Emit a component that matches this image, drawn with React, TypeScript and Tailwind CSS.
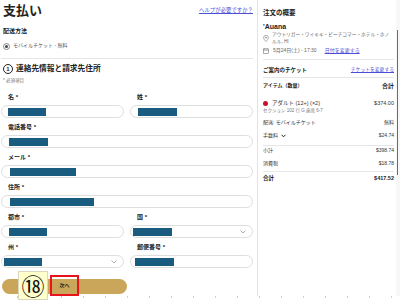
import React from "react";

const mask = "h-[8px] bg-[#1a5c80]";

function Chevron() {
    return (
        <svg width="6" height="4" viewBox="0 0 6 4" className="ml-auto mr-[6px]">
            <path d="M0.5 0.5 L3 3 L5.5 0.5" fill="none" stroke="#9a9a9a" strokeWidth="0.8" />
        </svg>
    );
}

function Field({ label, maskClass, select, className = "" }: { label: string; maskClass: string; select?: boolean; className?: string }) {
    return (
        <div className={className}>
            <div className="h-[10px] leading-[10px] pl-[7px] text-[6px] font-bold text-[#222]">{label}</div>
            <div className="mt-[3px] h-[13px] rounded-full border border-[#dedede] flex items-center">
                <div className={`${mask} ${maskClass}`} />
                {select && <Chevron />}
            </div>
        </div>
    );
}

function Row({ left, right, className = "" }: { left: string; right: string; className?: string }) {
    return (
        <div className={`h-[10px] flex items-center justify-between text-[5px] text-[#333] ${className}`}>
            <span>{left}</span>
            <span>{right}</span>
        </div>
    );
}

export default function App() {
    return (
        <div className="w-[400px] h-[306px] bg-white overflow-hidden flex flex-col font-['Liberation_Sans','Noto_Sans_CJK_JP',sans-serif] text-[#222]">
            <div className="h-[296px] flex">
                {/* checkout form */}
                <div className="w-[257px] pl-[1px] pr-[4px]">
                    <div className="h-[20px] flex items-center justify-between">
                        <h1 className="ml-[2px] text-[13px] font-bold leading-none">支払い</h1>
                        <a className="text-[5.4px] text-[#4b4fd6] underline">ヘルプが必要ですか？</a>
                    </div>

                    <div className="mt-[6px] h-[10px] leading-[10px] pl-[2px] text-[6px] font-bold">配送方法</div>
                    <div className="mt-[5px] h-[10px] flex items-center pl-[2px] gap-[3px]">
                        <span className="w-[7px] h-[7px] rounded-full border border-[#888] flex items-center justify-center">
                            <span className="w-[3px] h-[3px] rounded-full bg-[#444]" />
                        </span>
                        <span className="text-[5px] text-[#555]">モバイルチケット - 無料</span>
                    </div>

                    <div className="mt-[7px] h-px bg-[#e6e6e6]" />

                    <div className="mt-[3px] h-[14px] flex items-center gap-[3px] pl-[2px]">
                        <span className="w-[10px] h-[10px] rounded-full border border-[#222] flex items-center justify-center text-[6px] font-bold leading-none">1</span>
                        <span className="text-[7.7px] font-bold">連絡先情報と請求先住所</span>
                    </div>
                    <div className="mt-[1px] h-[8px] leading-[8px] pl-[2px] text-[4.5px] text-[#777]">* 必須項目</div>

                    <div className="mt-[7px] grid grid-cols-2 gap-x-[6px]">
                        <Field label="名 *" maskClass="ml-[6px] w-[38px]" />
                        <Field label="姓 *" maskClass="ml-[7px] w-[39px]" />
                    </div>
                    <Field className="mt-[4px]" label="電話番号 *" maskClass="ml-[7px] w-[39px]" />
                    <Field className="mt-[4px]" label="メール *" maskClass="ml-[8px] w-[66px]" />
                    <Field className="mt-[4px]" label="住所 *" maskClass="ml-[8px] w-[84px]" />
                    <div className="mt-[4px] grid grid-cols-2 gap-x-[6px]">
                        <Field label="都市 *" maskClass="ml-[7px] w-[38px]" />
                        <Field label="国 *" maskClass="ml-[2px] w-[39px]" select />
                    </div>
                    <div className="mt-[4px] grid grid-cols-2 gap-x-[6px]">
                        <Field label="州 *" maskClass="ml-[2px] w-[38px]" select />
                        <Field label="郵便番号 *" maskClass="ml-[4px] w-[39px]" />
                    </div>

                    <div className="relative mt-[11px] ml-[1px] w-[125px] h-[15px] rounded-full bg-[#c9a65a]">
                        <div className="absolute left-[16px] top-[-8px] w-[30px] h-[29px] bg-[#ffffcc] border border-[#d8d8c0] flex items-center justify-center text-[23px] leading-none text-[#111] font-['Noto_Sans_CJK_JP',sans-serif]">
                            ⑱
                        </div>
                        <div className="absolute left-[48px] top-[-4px] w-[29px] h-[21px] border-2 border-[#e8141b] flex items-center justify-center text-[5px] font-bold text-[#222]">
                            次へ
                        </div>
                    </div>
                </div>

                {/* order summary */}
                <div className="relative w-[143px] border-l border-[#e3e3e3] pl-[5px] pr-[6px]">
                    <div className="mt-[8px] h-[10px] leading-[10px] text-[6.5px] font-bold">注文の概要</div>
                    <div className="mt-[4px] h-[10px] leading-[10px] text-[7px] font-bold">'Auana</div>
                    <div className="flex items-center gap-[3px] text-[#666]">
                        <svg width="6" height="7" viewBox="0 0 6 7" className="shrink-0">
                            <path d="M3 6.6 C1.6 5 0.6 3.8 0.6 2.6 A2.4 2.4 0 0 1 5.4 2.6 C5.4 3.8 4.4 5 3 6.6Z" fill="none" stroke="#777" strokeWidth="0.6" />
                            <circle cx="3" cy="2.6" r="0.8" fill="#777" />
                        </svg>
                        <div className="text-[4.7px] leading-[6.5px] whitespace-nowrap">
                            アウトリガー・ワイキキ・ビーチコマー・ホテル・ホノ
                            <br />
                            ルル, HI
                        </div>
                    </div>
                    <div className="mt-[2px] h-[8px] flex items-center gap-[4px] text-[5px] text-[#666]">
                        <svg width="6" height="6" viewBox="0 0 6 6" className="shrink-0">
                            <rect x="0.4" y="0.9" width="5.2" height="4.7" fill="none" stroke="#777" strokeWidth="0.6" />
                            <line x1="0.4" y1="2.2" x2="5.6" y2="2.2" stroke="#777" strokeWidth="0.6" />
                            <line x1="1.7" y1="0" x2="1.7" y2="1.4" stroke="#777" strokeWidth="0.6" />
                            <line x1="4.3" y1="0" x2="4.3" y2="1.4" stroke="#777" strokeWidth="0.6" />
                        </svg>
                        <span>5月24日(土) - 17:30</span>
                        <a className="ml-[4px] text-[#4b4fd6] underline">日付を変更する</a>
                    </div>

                    <div className="mt-[4px] h-px bg-[#e6e6e6]" />

                    <div className="mt-[5px] h-[10px] flex items-center justify-between">
                        <span className="text-[5.5px] font-bold">ご案内のチケット</span>
                        <a className="text-[4.8px] text-[#4b4fd6] underline">チケットを変更する</a>
                    </div>
                    <div className="mt-[2px] h-px bg-[#e6e6e6]" />
                    <div className="mt-[3px] h-[10px] flex items-center justify-between text-[5px] font-bold">
                        <span>アイテム（数量）</span>
                        <span className="text-[6px]">合計</span>
                    </div>

                    <div className="mt-[7px] h-[10px] flex items-center text-[5.5px] text-[#333]">
                        <span className="w-[5px] h-[5px] rounded-full bg-[#c8102e] mr-[4px]" />
                        <span>アダルト (12+) (×2)</span>
                        <span className="ml-auto">$374.00</span>
                    </div>
                    <div className="h-[6px] leading-[6px] text-[4.5px] text-[#777]">セクション 102 行 G 座席 6-7</div>

                    <Row className="mt-[4px]" left="配送: モバイルチケット" right="無料" />
                    <div className="mt-[3px] h-[10px] flex items-center justify-between text-[5px] text-[#333]">
                        <span className="flex items-center gap-[3px]">
                            手数料
                            <svg width="5" height="4" viewBox="0 0 5 4">
                                <path d="M0.6 0.8 L2.5 2.8 L4.4 0.8" fill="none" stroke="#222" strokeWidth="1" />
                            </svg>
                        </span>
                        <span>$24.74</span>
                    </div>
                    <div className="mt-[4px] h-px bg-[#e6e6e6]" />
                    <Row left="小計" right="$398.74" />
                    <Row className="mt-[3px]" left="消費税" right="$18.78" />
                    <div className="mt-[2px] h-px bg-[#e6e6e6]" />
                    <div className="mt-[1px] h-[10px] flex items-center justify-between text-[5.5px] font-bold">
                        <span>合計</span>
                        <span>$417.52</span>
                    </div>

                    <div className="absolute right-0 top-0 w-[4px] h-full bg-[#f7f7f7]" />
                    <div className="absolute right-[2px] top-[30px] w-[1.5px] h-[145px] bg-[#6b6b6b]" />
                </div>
            </div>
            <div className="h-[2px] bg-[repeating-linear-gradient(90deg,transparent_0_17px,#cfcfcf_17px_18px,transparent_18px_22px)]" />
        </div>
    );
}
